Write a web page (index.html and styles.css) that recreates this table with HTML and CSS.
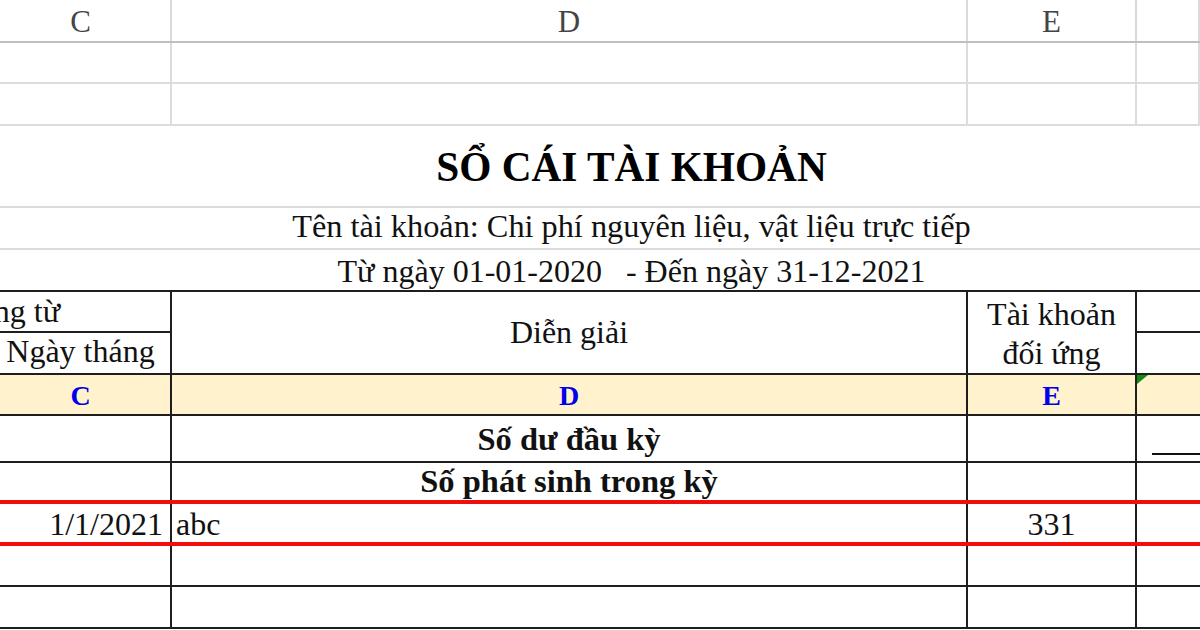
FILE: index.html
```html
<!DOCTYPE html>
<html lang="vi">
<head>
<meta charset="utf-8">
<title>Sổ cái tài khoản</title>
<link rel="stylesheet" href="styles.css">
</head>
<body>
<div class="sheet">
  <div class="row colhead">
    <div class="cell">C</div>
    <div class="cell">D</div>
    <div class="cell">E</div>
    <div class="cell"></div>
  </div>
  <div class="row grid r41"><div class="cell"></div><div class="cell"></div><div class="cell"></div><div class="cell"></div></div>
  <div class="row grid r42"><div class="cell"></div><div class="cell"></div><div class="cell"></div><div class="cell"></div></div>

  <div class="banner title">SỔ CÁI TÀI KHOẢN</div>
  <div class="banner sub">Tên tài khoản: Chi phí nguyên liệu, vật liệu trực tiếp</div>
  <div class="banner date">Từ ngày 01-01-2020   - Đến ngày 31-12-2021</div>

  <div class="thead">
    <div class="th c1 clip"><span>Chứng từ</span></div>
    <div class="th c2">Ngày tháng</div>
    <div class="th d">Diễn giải</div>
    <div class="th e">Tài khoản<br>đối ứng</div>
    <div class="th f1"></div>
    <div class="th f2"></div>
  </div>

  <div class="row tbl codes">
    <div class="td">C</div>
    <div class="td">D</div>
    <div class="td">E</div>
    <div class="td flag"><span class="tri"></span></div>
  </div>
  <div class="row tbl h47">
    <div class="td"></div>
    <div class="td bold pb3">Số dư đầu kỳ</div>
    <div class="td"></div>
    <div class="td dash"><span class="rule"></span></div>
  </div>
  <div class="row tbl h41 redline">
    <div class="td"></div>
    <div class="td bold pb0">Số phát sinh trong kỳ</div>
    <div class="td"></div>
    <div class="td"></div>
  </div>
  <div class="row tbl h42 redline">
    <div class="td right">1/1/2021</div>
    <div class="td left">abc</div>
    <div class="td">331</div>
    <div class="td"></div>
  </div>
  <div class="row tbl h41">
    <div class="td"></div><div class="td"></div><div class="td"></div><div class="td"></div>
  </div>
  <div class="row tbl h42">
    <div class="td"></div><div class="td"></div><div class="td"></div><div class="td"></div>
  </div>
</div>
</body>
</html>
```

FILE: styles.css
```css
* { box-sizing: border-box; }

html, body {
  margin: 0;
  padding: 0;
  background: #ffffff;
}

body {
  width: 1200px;
  height: 630px;
  overflow: hidden;
  font-family: "Liberation Serif", "Times New Roman", serif;
  font-size: 32px;
  color: #111;
}

/* column C starts a little left of the visible edge */
.sheet {
  width: 1209px;
  margin-left: -9px;
}

.row {
  display: grid;
  grid-template-columns: 181px 796px 169px 1fr;
}

/* Excel column letters */
.colhead {
  height: 43px;
  border-bottom: 2px solid #bfbfbf;
}
.colhead .cell {
  display: flex;
  align-items: center;
  justify-content: center;
  padding-top: 3px;
  border-right: 2px solid #dadada;
  color: #444;
  font-size: 31px;
}

.grid .cell {
  border-right: 2px solid #dcdcdc;
}
.grid {
  border-bottom: 2px solid #dcdcdc;
}
.r41 { height: 41px; }
.r42 { height: 42px; }

/* merged title rows (range extends past the right edge) */
.banner {
  display: flex;
  justify-content: center;
  white-space: pre;
  padding-left: 72px;
}
.title {
  height: 82px;
  align-items: center;
  padding-top: 2px;
  font-weight: bold;
  font-size: 41.3px;
  color: #000;
  border-bottom: 2px solid #dcdcdc;
}
.sub {
  height: 42px;
  align-items: flex-end;
  line-height: 1.1;
  padding-bottom: 3px;
  border-bottom: 2px solid #dcdcdc;
  font-size: 32.3px;
}
.date {
  height: 40px;
  align-items: flex-end;
  line-height: 1.1;
  padding-bottom: 1px;
}

/* table header */
.thead {
  display: grid;
  grid-template-columns: 181px 796px 169px 1fr;
  grid-template-rows: 41px 42px;
  border-top: 2px solid #1e1e1e;
}
.th {
  display: flex;
  align-items: center;
  justify-content: center;
  line-height: 39px;
  text-align: center;
  border-right: 2px solid #1e1e1e;
  border-bottom: 2px solid #1e1e1e;
}
.c1 { grid-column: 1; grid-row: 1; }
.c2 { grid-column: 1; grid-row: 2; align-items: flex-end; line-height: 1.1; padding-bottom: 4px; }
.d  { grid-column: 2; grid-row: 1 / span 2; }
.e  { grid-column: 3; grid-row: 1 / span 2; padding-top: 2px; }
.f1 { grid-column: 4; grid-row: 1; border-right: none; }
.f2 { grid-column: 4; grid-row: 2; border-right: none; }

/* "Chứng từ" belongs to a merged range starting in column B */
.clip {
  overflow: hidden;
  justify-content: flex-end;
  padding-right: 110px;
  white-space: nowrap;
}
.clip span { flex: none; }

/* table body */
.tbl {
  border-bottom: 2px solid #1e1e1e;
}
.td {
  display: flex;
  align-items: flex-end;
  justify-content: center;
  line-height: 1.1;
  border-right: 2px solid #1e1e1e;
  white-space: nowrap;
}
.tbl .td:last-child { border-right: none; }

.codes {
  height: 41px;
  background: #fff2cc;
}
.codes .td {
  color: #0000ee;
  font-weight: bold;
  font-size: 28px;
  padding-bottom: 2px;
}
.flag { position: relative; }
.tri {
  position: absolute;
  left: 0;
  top: 0;
  width: 0;
  height: 0;
  border-top: 9px solid #138a13;
  border-right: 11px solid transparent;
}

.h41 { height: 41px; }
.h42 { height: 42px; }
.h47 { height: 47px; }

.bold { font-weight: bold; font-size: 32.5px; }
.pb3 { padding-bottom: 3px; }
.pb0 { padding-bottom: 0; }

.dash {
  align-items: flex-start;
  padding-top: 37px;
  padding-left: 15px;
}
.rule {
  display: block;
  width: 100%;
  height: 2px;
  background: #111;
}

.redline {
  border-bottom: 4px solid #f20d0d;
}

.right { justify-content: flex-end; padding-right: 7px; }
.left { justify-content: flex-start; padding-left: 4px; }
```
